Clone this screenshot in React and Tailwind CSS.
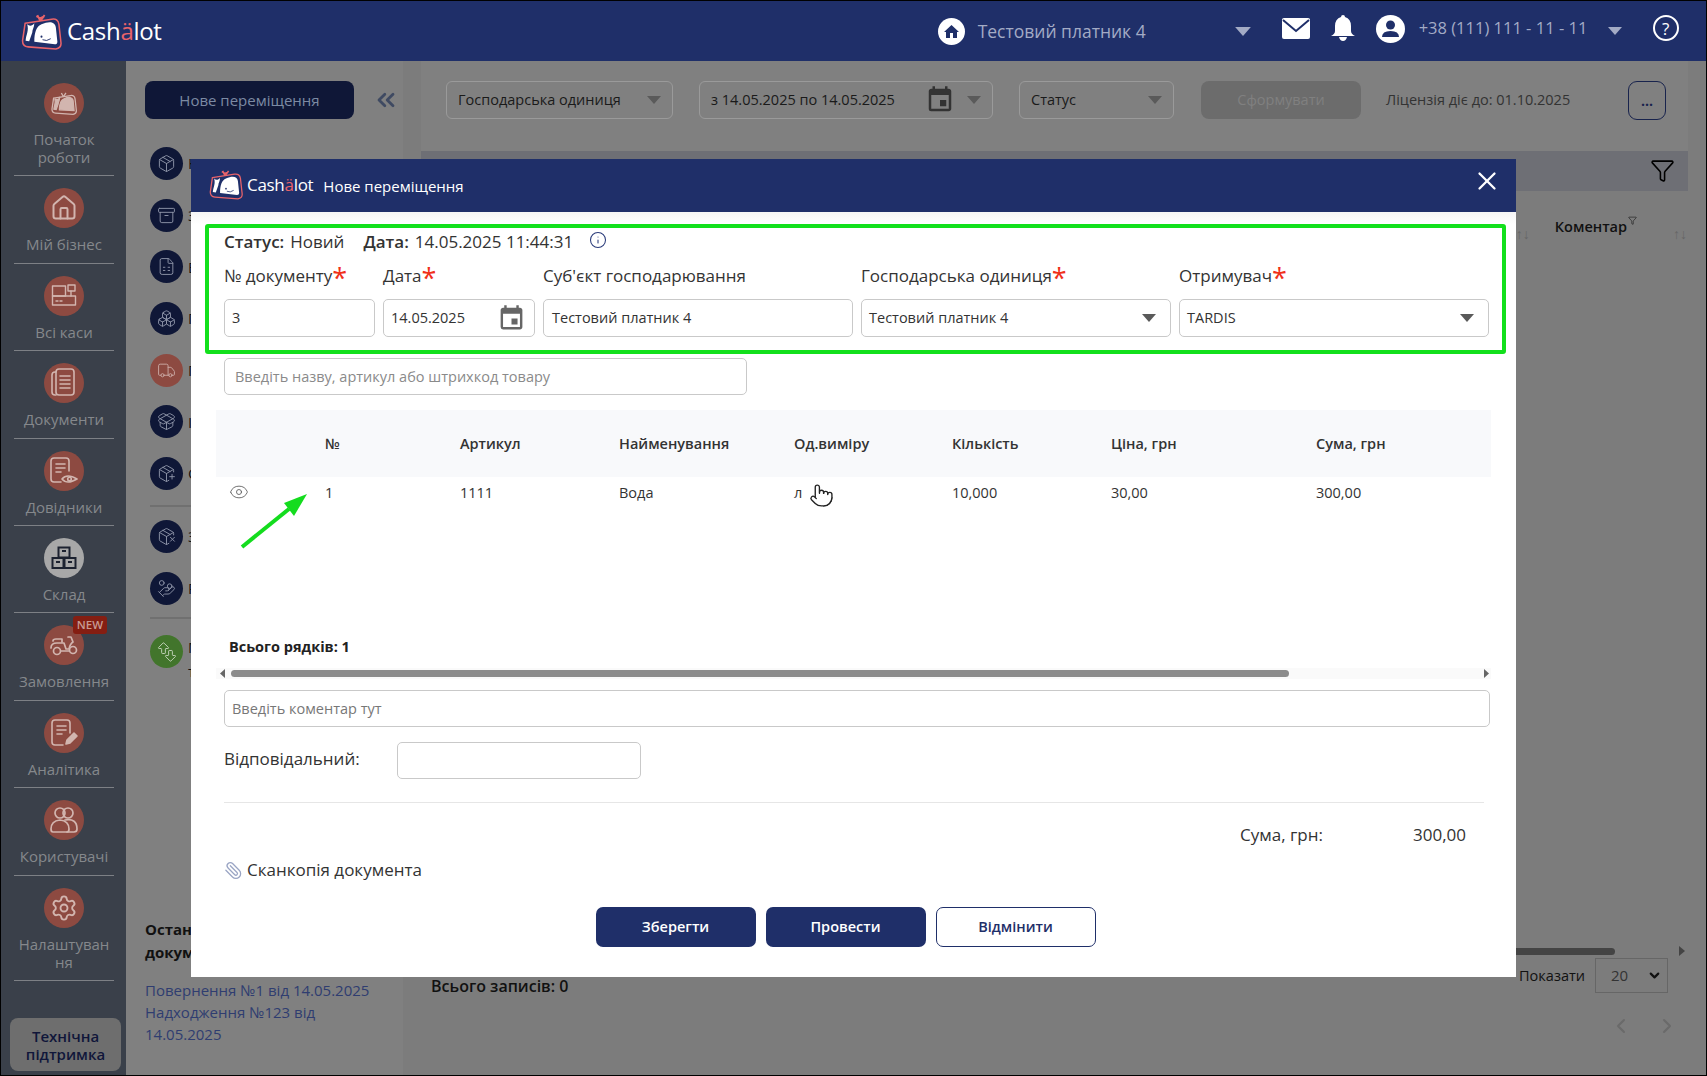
import React from 'react';
import {
  Home, Settings, ChevronsLeft, ChevronDown, ChevronLeft, ChevronRight, Filter, X, Eye, Pointer, Paperclip, Info,
  Package, Archive, FileSpreadsheet, Boxes, PackageOpen, PackagePlus, PackageX, ArrowBigUp, ArrowBigDown, HandCoins, Truck,
} from 'lucide-react';
import { MdEvent } from 'react-icons/md';

const Caret = ({ color = '#5a5a5a', w = 14, h = 8 }) => (
  <svg width={w} height={h} viewBox="0 0 14 8" className="shrink-0"><polygon points="0,0 14,0 7,8" fill={color} /></svg>
);

const Whale = ({ className }) => (
  <svg viewBox="0 0 40 37" className={className} fill="none">
    <path d="M19 9 L16 3 M19 9 L23 3 M15 4 L19 6 L23 4" stroke="#e8636a" strokeWidth="1.8" />
    <path d="M4 11 L30 7 Q36 6 37 12 L39 30 Q39.5 35 34 36 L7 34 Q1.5 33.5 1.5 28 Z" stroke="#e8636a" strokeWidth="1.5" fill="#1f2f69" />
    <path d="M13 29 C13 20 15 14 20 12 C27 9 33 9 34 15 L35.5 29 Q35.5 31.5 33 31.5 Z" fill="#fff" />
    <path d="M6 12 C8 14 11 14 13 11 C13 15 11 17 11 20 L8 28.5 L4.5 28 C5 22 8 18 6 12 Z" fill="#fff" />
    <circle cx="20" cy="24" r="1" fill="#1f2f69" />
    <path d="M21 27 Q25 29 29 26" stroke="#1f2f69" strokeWidth="0.9" />
  </svg>
);

const ic = { fill: 'none', stroke: 'currentColor', strokeWidth: 1.4, strokeLinejoin: 'round', strokeLinecap: 'round' };

const RegisterIcon = () => (
  <svg width="26" height="26" viewBox="0 0 26 26" {...ic}>
    <rect x="1.5" y="3" width="13" height="10" /><rect x="17" y="2" width="7" height="6" /><path d="M20 8v5" />
    <rect x="1.5" y="13" width="23" height="9" /><path d="M5 18h2M9 18h2" />
  </svg>
);
const DocsIcon = () => (
  <svg width="26" height="30" viewBox="0 0 26 30" {...ic} strokeWidth="1.6">
    <path d="M5 4h-1q-3 0-3 3v17q0 3 3 3h1" /><rect x="5" y="1" width="18" height="26" rx="3" />
    <path d="M9 8h10M9 12h10M9 16h10M9 20h10" />
  </svg>
);
const RefIcon = () => (
  <svg width="30" height="30" viewBox="0 0 30 30" {...ic} strokeWidth="1.6">
    <path d="M12 26H5q-3 0-3-3V5q0-3 3-3h12q3 0 3 3v10" /><path d="M7 8h9M7 12h9M7 16h5" />
    <path d="M13 23q5-6 15 0-10 6-15 0z" /><circle cx="20.5" cy="23" r="1.8" />
  </svg>
);
const StockIcon = () => (
  <svg width="26" height="24" viewBox="0 0 26 24" fill="none" stroke="#1c2230" strokeWidth="2">
    <rect x="7.5" y="1.5" width="11" height="10" /><rect x="1.5" y="12" width="11" height="10" /><rect x="13.5" y="12" width="11" height="10" />
    <path d="M11 5h4M5 16h4M17 16h4" />
  </svg>
);
const ScooterIcon = () => (
  <svg width="28" height="22" viewBox="0 0 28 22" {...ic} strokeWidth="1.7">
    <circle cx="7" cy="17" r="3.5" /><circle cx="23" cy="16" r="3.5" />
    <path d="M1 14q0-5 6-5h7l2 6h3q1-5 4-7l-2-5h-3" /><path d="M3 7q0-2 3-2h6v3" /><path d="M11 17h8" />
  </svg>
);
const AnalyticsIcon = () => (
  <svg width="30" height="30" viewBox="0 0 30 30" {...ic} strokeWidth="1.6">
    <path d="M14 27H6q-3 0-3-3V5q0-3 3-3h12q3 0 3 3v10" /><path d="M8 8h9M8 12h9M8 16h5" />
    <path d="M17 26l1-4 7-7 3 3-7 7z" fill="currentColor" />
  </svg>
);
const UsersIcon = () => (
  <svg width="28" height="28" viewBox="0 0 28 28" {...ic} strokeWidth="1.7">
    <circle cx="10" cy="7" r="5" /><circle cx="18" cy="7" r="5" />
    <path d="M3 26q-2 0-2-3 0-8 9-9 9 1 9 9 0 3-2 3z" /><path d="M15 14q12-2 12 9 0 3-3 3h-7" />
  </svg>
);
const WhaleMini = () => (
  <svg width="26" height="26" viewBox="0 0 40 37" fill="none" stroke="currentColor" strokeWidth="2">
    <path d="M19 9 L16 3 M19 9 L23 3" />
    <path d="M4 11 L30 7 Q36 6 37 12 L39 30 Q39.5 35 34 36 L7 34 Q1.5 33.5 1.5 28 Z" />
    <path d="M13 29 C13 20 15 14 20 12 C27 9 33 9 34 15 L35.5 30 Z" fill="currentColor" />
    <path d="M6 12 C8 14 11 14 13 11 C13 15 11 17 11 20 L8 28.5 L4.5 28 C5 22 8 18 6 12 Z" fill="currentColor" />
  </svg>
);

const navItems = [
  { label: ['Початок', 'роботи'], icon: <WhaleMini /> },
  { label: ['Мій бізнес'], icon: <Home size={28} strokeWidth={1.7} /> },
  { label: ['Всі каси'], icon: <RegisterIcon /> },
  { label: ['Документи'], icon: <DocsIcon /> },
  { label: ['Довідники'], icon: <RefIcon /> },
  { label: ['Склад'], icon: <StockIcon />, active: true },
  { label: ['Замовлення'], icon: <ScooterIcon />, badge: true },
  { label: ['Аналітика'], icon: <AnalyticsIcon /> },
  { label: ['Користувачі'], icon: <UsersIcon /> },
  { label: ['Налаштуван', 'ня'], icon: <Settings size={28} strokeWidth={1.6} /> },
];

const sideList = [
  { Icon: Package, text: 'Надходження' },
  { Icon: Archive, text: 'Замовлення' },
  { Icon: FileSpreadsheet, text: 'Видаткові' },
  { Icon: Boxes, text: 'Переміщення' },
  { Icon: Truck, text: 'Повернення', red: true },
  { Icon: PackageOpen, text: 'Інвентаризація' },
  { Icon: PackagePlus, text: 'Оприбуткування' },
  { Icon: PackageX, text: 'Залишки', sep: true },
  { Icon: HandCoins, text: 'Ревізія' },
];

const Req = () => <span className="text-[#f0301a] text-[27px] leading-[10px] align-[-6px] font-normal">*</span>;

const Field = ({ children, className = '' }) => (
  <div className={`h-[38px] rounded-[5px] border border-[#c9c9c9] bg-white flex items-center text-[14.5px] text-[#333] ${className}`}>{children}</div>
);

const FilterSelect = ({ children, className }) => (
  <div className={`h-[38px] rounded-[6px] border border-[#9a9a9a] flex items-center justify-between pl-[11px] pr-[11px] text-[14.5px] text-[#1a1a1a] ${className}`}>{children}</div>
);

const cols = 'grid grid-cols-[109px_135px_159px_175px_158px_159px_205px_175px]';

export default function App() {
  return (
    <div className="relative w-[1707px] h-[1076px] overflow-hidden border border-black bg-[#7c7c7c] flex flex-col font-['Open_Sans',sans-serif]">
      {/* TOP BAR */}
      <header className="h-[60px] shrink-0 bg-[#1f2f69] flex items-center pl-[20px]">
        <Whale className="w-[41px] h-[38px]" />
        <div className="ml-[5px] text-[24px] leading-none font-medium tracking-[-0.3px] text-white">Cash<span className="text-[#e8636a]">ä</span>lot</div>

        <div className="ml-[776px] w-[27px] h-[27px] rounded-full bg-white flex items-center justify-center">
          <svg width="17" height="17" viewBox="0 0 17 17"><path d="M8.5 2 L16 9 H14 V15 H10 V10 H7 V15 H3 V9 H1 Z" fill="#1f2f69" /></svg>
        </div>
        <div className="ml-[13px] w-[257px] flex items-center text-[17.5px] text-[#a3abc5] whitespace-nowrap">Тестовий платник 4</div>
        <Caret color="#a3abc5" w={16} h={9} />
        <svg width="28" height="21" viewBox="0 0 28 21" className="ml-[31px] mb-[6px]"><rect width="28" height="21" rx="2" fill="#fff" /><path d="M1 2 L14 13 L27 2" fill="none" stroke="#1f2f69" strokeWidth="2" /></svg>
        <svg width="24" height="26" viewBox="0 0 24 26" className="ml-[21px] mb-[6px]"><path d="M12 0q2 0 2 2 6 2 6 9v5q0 3 4 5H0q4-2 4-5v-5q0-7 6-9 0-2 2-2z" fill="#fff" /><path d="M8 22h8q-1 4-4 4t-4-4z" fill="#fff" /></svg>
        <svg width="29" height="28" viewBox="0 0 29 28" className="ml-[21px] mb-[4px]"><ellipse cx="14.5" cy="14" rx="14.5" ry="14" fill="#fff" /><circle cx="14.5" cy="10" r="4.5" fill="#1f2f69" /><path d="M6 22q0-6 8.5-6T23 22z" fill="#1f2f69" /></svg>
        <div className="ml-[14px] w-[189px] text-[16.5px] text-[#a3abc5] whitespace-nowrap mb-[6px]">+38 (111) 111 - 11 - 11</div>
        <Caret color="#a3abc5" w={14} h={8} />
        <div className="ml-[31px] mb-[6px] w-[26px] h-[26px] rounded-full border-2 border-white flex items-center justify-center text-white text-[17px] leading-none">?</div>
      </header>

      <div className="flex-1 flex min-h-0">
        {/* SIDEBAR */}
        <aside className="w-[125px] shrink-0 bg-[#3a404a] flex flex-col justify-between">
          <nav className="pt-[22px]">
            {navItems.map((item) => (
              <div key={item.label[0]} className="relative mx-[13px] w-[100px] flex flex-col items-center pb-[9.4px] border-b border-[#7d8085] mb-[12px] text-[15px] leading-[18px] text-[#85888c] text-center">
                <div className={`w-[40px] h-[40px] rounded-full flex items-center justify-center ${item.active ? 'bg-[#a8a8a8] text-[#1c2230]' : 'bg-[#8d4a41] text-[#d2b5af]'}`}>{item.icon}</div>
                {item.badge && <span className="absolute left-[59px] -top-[9px] w-[34px] h-[18px] rounded-[3px] bg-[#851e12] text-[#c79a92] text-[11.5px] leading-[18px] font-semibold">NEW</span>}
                <div className="mt-[7px]">
                  {item.label.map((l) => <div key={l}>{l}</div>)}
                </div>
              </div>
            ))}
          </nav>
          <div className="ml-[9px] mb-[4px] w-[111px] h-[53px] rounded-[8px] bg-[#6e6e6e] flex items-center justify-center text-center text-[15px] leading-[18px] font-semibold text-[#10163a]">Технічна<br />підтримка</div>
        </aside>

        {/* LEFT LIST */}
        <div className="w-[277px] shrink-0 bg-[#808080] pl-[19px] pt-[20px] pb-[30px] flex flex-col">
          <div className="flex items-center">
            <div className="w-[209px] h-[38px] rounded-[8px] bg-[#0f1737] flex items-center justify-center text-[15px] text-[#7c8aa3]">Нове переміщення</div>
            <ChevronsLeft size={28} strokeWidth={2.4} className="ml-[18px] text-[#3f4a62]" />
          </div>
          <div className="mt-[28px] pl-[5px]">
            {sideList.map(({ Icon, text, red, sep }) => (
              <React.Fragment key={text}>
                {sep && <div className="w-[200px] h-[2px] bg-[#707070] mb-[13px] -mt-[4px]" />}
                <div className="flex items-center h-[33px] mb-[18.7px] text-[15px] text-[#111]">
                  <div className={`w-[33px] h-[33px] rounded-full flex items-center justify-center ${red ? 'bg-[#8d4a41] text-[#c9a8a2]' : 'bg-[#0f1737] text-[#8d93a8]'}`}><Icon size={19} strokeWidth={1.2} /></div>
                  <span className="ml-[5px]">{text}</span>
                </div>
              </React.Fragment>
            ))}
            <div className="w-[200px] h-[2px] bg-[#707070] -mt-[6px] mb-[16px]" />
            <div className="flex items-start text-[15px] leading-[24px] text-[#111]">
              <div className="relative w-[33px] h-[33px] rounded-full bg-[#42752c] text-[#c5d4bc]">
                <ArrowBigUp size={15} strokeWidth={1.5} className="absolute left-[6px] top-[6px]" />
                <ArrowBigDown size={15} strokeWidth={1.5} className="absolute left-[13px] top-[13px]" />
              </div>
              <span className="ml-[5px]">Мої<br />товари</span>
            </div>
          </div>
          <div className="mt-auto">
            <div className="text-[15px] leading-[23px] font-bold text-[#111]">Останні<br />документи</div>
            <div className="mt-[15px] text-[15px] leading-[22px] text-[#2f3d70]">Повернення №1 від 14.05.2025<br />Надходження №123 від<br />14.05.2025</div>
          </div>
        </div>

        {/* MAIN */}
        <main className="flex-1 ml-[18px] mr-[18px] flex flex-col bg-[#808080] mb-[16px] min-w-0">
          <div className="h-[80px] shrink-0 pt-[20px] pl-[25px] flex items-start">
            <FilterSelect className="w-[227px]">Господарська одиниця<Caret /></FilterSelect>
            <FilterSelect className="ml-[26px] w-[294px]">
              <span className="whitespace-nowrap">з 14.05.2025 по 14.05.2025</span>
              <MdEvent size={30} color="#333" className="ml-[19px]" /><Caret />
            </FilterSelect>
            <FilterSelect className="ml-[26px] w-[155px]">Статус<Caret /></FilterSelect>
            <div className="ml-[27px] w-[160px] h-[38px] rounded-[8px] bg-[#6c6c6c] flex items-center justify-center text-[14.5px] text-[#808080]">Сформувати</div>
            <div className="ml-[25px] w-[196px] h-[38px] flex items-center whitespace-nowrap text-[14.5px] text-[#333]">Ліцензія діє до: 01.10.2025</div>
            <div className="ml-[46px] w-[38px] h-[39px] rounded-[9px] border border-[#18234d] flex items-center justify-center text-[#18234d] text-[14px] font-bold leading-none">...</div>
          </div>
          <div className="mt-[10px] h-[40px] shrink-0 bg-[#6e6f75] flex items-start justify-end pr-[13px] pt-[7px]">
            <Filter size={25} strokeWidth={1.5} className="text-black" />
          </div>
          <div className="flex-1 bg-[#7c7c7c] flex flex-col min-h-0">
            <div className="h-[40px] flex items-center justify-end pr-[1px] mt-[16px] text-[14.5px] text-[#111]">
              <span className="text-[#666] text-[14px] mr-[25px] mt-[12px]">↑↓</span>
              <span className="font-semibold">Коментар</span>
              <Filter size={9} strokeWidth={1.5} className="mb-[14px] ml-[1px]" />
              <span className="text-[#666] text-[14px] ml-[36px] mt-[12px]">↑↓</span>
            </div>
            <div className="flex-1" />
            <div className="h-[14px] flex items-center relative">
              <div className="ml-[0px] w-[1194px] h-[7px] rounded-full bg-[#444]" />
              <svg width="6" height="10" viewBox="0 0 6 10" className="ml-[64px]"><polygon points="0,0 6,5 0,10" fill="#444" /></svg>
            </div>
            <div className="h-[35px] flex items-center justify-between pl-[10px] pr-[20px]">
              <span className="text-[16px] font-semibold text-[#111] mt-[21px]">Всього записів: 0</span>
              <div className="flex items-center">
                <span className="text-[14.5px] text-[#111]">Показати</span>
                <div className="ml-[10px] w-[73px] h-[35px] border border-[#666] flex items-center justify-between px-[15px] pr-[5px] text-[15px] text-[#333]">20<ChevronDown size={15} strokeWidth={3.5} className="text-[#111]" /></div>
              </div>
            </div>
            <div className="h-[66px] flex items-center justify-end gap-[22px] pr-[9px] text-[#6a6a6a]">
              <ChevronLeft size={24} strokeWidth={2} /><ChevronRight size={24} strokeWidth={2} />
            </div>
          </div>
        </main>
      </div>

      {/* MODAL */}
      <div className="absolute left-[190px] top-[158px] w-[1325px] h-[818px] bg-white flex flex-col text-[#333]">
        <div className="h-[53px] shrink-0 bg-[#1f2f69] flex items-center pl-[18px]">
          <Whale className="w-[34px] h-[32px] -mt-[4px]" />
          <div className="ml-[4px] text-[17px] leading-none font-medium tracking-[-0.3px] text-white -mt-[3px]">Cash<span className="text-[#e8636a]">ä</span>lot</div>
          <div className="ml-[10px] text-[15px] font-medium text-white mt-[1px]">Нове переміщення</div>
          <X size={30} strokeWidth={1.8} className="ml-auto mr-[14px] -mt-[10px] text-white" />
        </div>

        <div className="flex-1 flex flex-col pt-[12px] bg-gradient-to-b from-[#f5f5f5] to-white to-[12px]">
          <div className="ml-[14px] mr-[10px] h-[130px] border-[4px] border-[#12e01c] rounded-[3px] bg-white pl-[15px] pr-[12px]">
            <div className="h-[27px] flex items-center text-[17px] whitespace-nowrap">
              <span className="font-semibold">Статус:</span>
              <span className="ml-[6px]">Новий</span>
              <span className="ml-[19px] font-semibold">Дата:</span>
              <span className="ml-[6px]">14.05.2025 11:44:31</span>
              <Info size={18} strokeWidth={1.4} className="ml-[16px] -mt-[3px] text-[#2a3b7a]" />
            </div>
            <div className="mt-[9px] grid grid-cols-[151px_152px_310px_310px_310px] gap-x-[8px] text-[17px]">
              <div className="h-[24px] leading-[24px] whitespace-nowrap">№ документу<Req /></div>
              <div className="h-[24px] leading-[24px]">Дата<Req /></div>
              <div className="h-[24px] leading-[24px]">Суб'єкт господарювання</div>
              <div className="h-[24px] leading-[24px] whitespace-nowrap">Господарська одиниця<Req /></div>
              <div className="h-[24px] leading-[24px]">Отримувач<Req /></div>
              <Field className="mt-[11px] pl-[7px]">3</Field>
              <Field className="mt-[11px] pl-[7px] pr-[8px] justify-between">14.05.2025<MdEvent size={29} color="#666" /></Field>
              <Field className="mt-[11px] pl-[8px]">Тестовий платник 4</Field>
              <Field className="mt-[11px] pl-[7px] pr-[14px] justify-between">Тестовий платник 4<Caret /></Field>
              <Field className="mt-[11px] pl-[7px] pr-[14px] justify-between">TARDIS<Caret /></Field>
            </div>
          </div>

          <div className="ml-[33px] mt-[4px] w-[523px] h-[37px] rounded-[5px] border border-[#c9c9c9] flex items-center pl-[10px] text-[14.5px] text-[#8a8a8a]">Введіть назву, артикул або штрихкод товару</div>

          <div className="ml-[25px] w-[1275px] mt-[15px]">
            <div className={`${cols} h-[67px] bg-[#f8f9fb] items-center text-[14.5px] font-semibold text-[#333]`}>
              <span /><span>№</span><span>Артикул</span><span>Найменування</span><span>Од.виміру</span><span>Кількість</span><span>Ціна, грн</span><span>Сума, грн</span>
            </div>
            <div className="h-[160px]">
              <div className={`${cols} h-[32px] items-center text-[14.5px]`}>
                <span className="pl-[13px]"><Eye size={20} strokeWidth={1} className="text-[#555] -mt-[2px]" /></span>
                <span>1</span><span>1111</span><span>Вода</span><span>л</span><span>10,000</span><span>30,00</span><span>300,00</span>
              </div>
            </div>
            <div className="h-[20px] pl-[13px] text-[14.5px] leading-[20px] font-bold text-[#222]">Всього рядків: 1</div>
            <div className="mt-[11px] h-[11px] bg-[#fafafa] flex items-center pl-[4px]">
              <svg width="5" height="9" viewBox="0 0 5 9"><polygon points="5,0 0,4.5 5,9" fill="#666" /></svg>
              <div className="ml-[6px] w-[1058px] h-[7px] rounded-full bg-[#8c8c8c]" />
              <svg width="5" height="9" viewBox="0 0 5 9" className="ml-[195px]"><polygon points="0,0 5,4.5 0,9" fill="#666" /></svg>
            </div>
          </div>

          <div className="ml-[33px] mt-[11px] w-[1266px] h-[37px] rounded-[5px] border border-[#c9c9c9] flex items-center pl-[7px] text-[14.5px] text-[#777]">Введіть коментар тут</div>

          <div className="ml-[33px] mt-[15px] flex items-start">
            <span className="w-[173px] text-[17px] leading-[34px]">Відповідальний:</span>
            <div className="w-[244px] h-[37px] rounded-[5px] border border-[#c9c9c9]" />
          </div>

          <div className="ml-[33px] mt-[23px] w-[1260px] h-px bg-[#e6e6e6]" />

          <div className="mt-[20px] h-[24px] flex items-center justify-end text-[17px] leading-[24px] pr-[50px]">
            <span>Сума, грн:</span>
            <span className="ml-[90px]">300,00</span>
          </div>

          <div className="ml-[33px] mt-[11px] h-[24px] flex items-center text-[17px]">
            <Paperclip size={19} strokeWidth={1.6} className="text-[#9aa5c4] -scale-x-100" />
            <span className="ml-[4px]">Сканкопія документа</span>
          </div>

          <div className="mt-[25px] flex justify-center gap-[10px] pr-[16px] text-[14.5px] font-semibold">
            <div className="w-[160px] h-[40px] rounded-[7px] bg-[#1f2f69] text-white flex items-center justify-center">Зберегти</div>
            <div className="w-[160px] h-[40px] rounded-[7px] bg-[#1f2f69] text-white flex items-center justify-center">Провести</div>
            <div className="w-[160px] h-[40px] rounded-[7px] border border-[#1f2f69] text-[#1f2f69] flex items-center justify-center">Відмінити</div>
          </div>
        </div>
      </div>

      {/* cursor and annotation arrow on top of the modal */}
      <Pointer size={25} strokeWidth={1.3} fill="#fff" className="absolute left-[808px] top-[482px] text-[#222]" />
      <svg width="72" height="60" viewBox="0 0 72 60" className="absolute left-[238px] top-[491px]">
        <line x1="3" y1="55" x2="50" y2="17" stroke="#14dc1e" strokeWidth="4" />
        <polygon points="68,2 45,11 55,24" fill="#14dc1e" />
      </svg>
    </div>
  );
}
